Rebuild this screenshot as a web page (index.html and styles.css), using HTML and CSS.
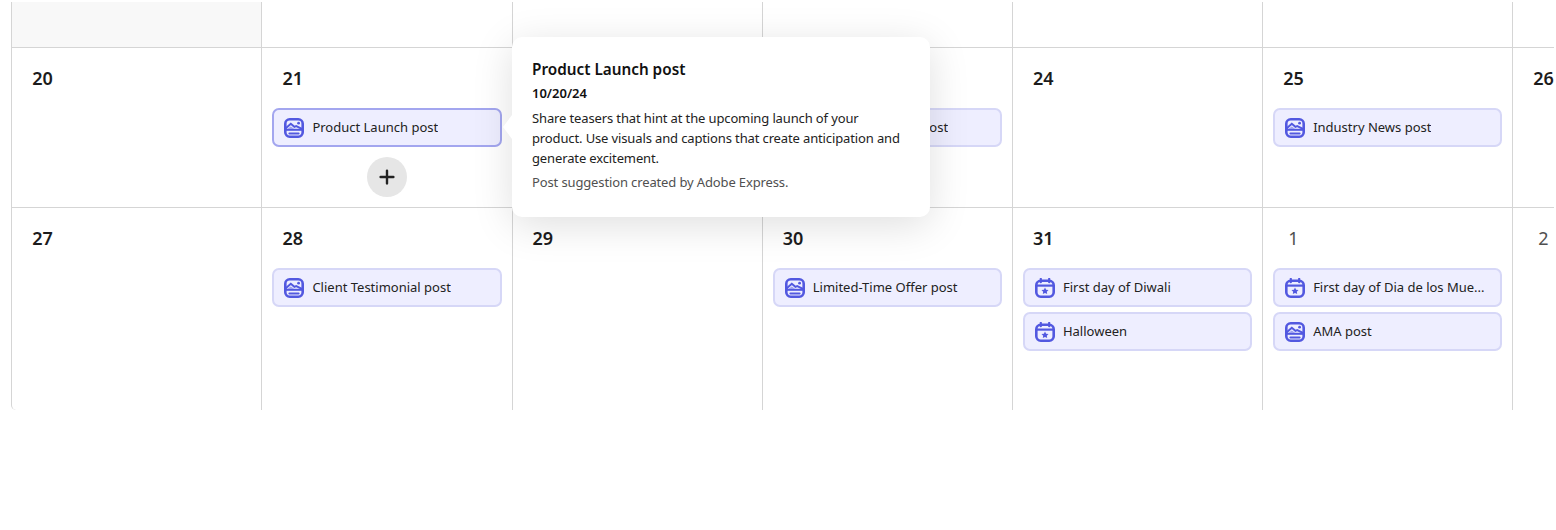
FILE: index.html
```html
<!DOCTYPE html>
<html lang="en">
<head>
<meta charset="utf-8">
<title>Content calendar</title>
<link rel="stylesheet" href="styles.css">
</head>
<body>
<svg class="defs" width="0" height="0" aria-hidden="true">
  <symbol id="i-post" viewBox="0 0 20 20">
    <rect x="1.3" y="1.3" width="17.4" height="17.4" rx="4.4" fill="none" stroke="currentColor" stroke-width="2.6"/>
    <path d="M1.5 10.4 L6.8 5.8 L10.4 8.8 L12.2 8 L18.5 11.2" fill="none" stroke="currentColor" stroke-width="2"/>
    <path d="M6.8 8.4 L10 10.8 H3.6 Z" fill="currentColor" opacity=".5"/>
    <rect x="1.5" y="10.8" width="17" height="2" fill="currentColor"/>
    <rect x="4.4" y="14.4" width="11.2" height="2" rx="1" fill="currentColor"/>
    <circle cx="14.6" cy="5.2" r="1.4" fill="currentColor"/>
  </symbol>
  <symbol id="i-event" viewBox="0 0 20 20">
    <rect x="1.3" y="2.8" width="17.4" height="15.9" rx="4.4" fill="none" stroke="currentColor" stroke-width="2.6"/>
    <path d="M1.5 7.6 H18.5" stroke="currentColor" stroke-width="2.2"/>
    <path d="M5.8 .9 V4.2 M14.2 .9 V4.2" stroke="currentColor" stroke-width="2.2" stroke-linecap="round"/>
    <path d="M10 9.6 L11.1 11.8 L13.5 12.1 L11.8 13.7 L12.2 16 L10 14.9 L7.8 16 L8.2 13.7 L6.5 12.1 L8.9 11.8 Z" fill="currentColor"/>
  </symbol>
</svg>
<main class="calendar">
  <div class="week week-top">
    <div class="day day-outside"></div><div class="day"></div><div class="day"></div><div class="day"></div><div class="day"></div><div class="day"></div><div class="day"></div>
  </div>
  <div class="week week-mid">
    <div class="day"><div class="num">20</div></div>
    <div class="day">
      <div class="num">21</div>
      <div class="chip chip-active"><svg class="ico"><use href="#i-post"/></svg><span class="label">Product Launch post</span></div>
      <button class="add" type="button" aria-label="Add post"><svg viewBox="0 0 16 16" width="16" height="16"><path d="M8 1.6 V14.4 M1.6 8 H14.4" stroke="#222" stroke-width="2.4" stroke-linecap="round"/></svg></button>
    </div>
    <div class="day"><div class="num">22</div></div>
    <div class="day">
      <div class="num">23</div>
      <div class="chip"><svg class="ico"><use href="#i-post"/></svg><span class="label">Customer Stories post</span></div>
    </div>
    <div class="day"><div class="num">24</div></div>
    <div class="day">
      <div class="num">25</div>
      <div class="chip"><svg class="ico"><use href="#i-post"/></svg><span class="label">Industry News post</span></div>
    </div>
    <div class="day"><div class="num">26</div></div>
  </div>
  <div class="week week-last">
    <div class="day"><div class="num">27</div></div>
    <div class="day">
      <div class="num">28</div>
      <div class="chip"><svg class="ico"><use href="#i-post"/></svg><span class="label">Client Testimonial post</span></div>
    </div>
    <div class="day"><div class="num">29</div></div>
    <div class="day">
      <div class="num">30</div>
      <div class="chip"><svg class="ico"><use href="#i-post"/></svg><span class="label">Limited-Time Offer post</span></div>
    </div>
    <div class="day">
      <div class="num">31</div>
      <div class="chip"><svg class="ico"><use href="#i-event"/></svg><span class="label">First day of Diwali</span></div>
      <div class="chip"><svg class="ico"><use href="#i-event"/></svg><span class="label">Halloween</span></div>
    </div>
    <div class="day">
      <div class="num num-next">1</div>
      <div class="chip"><svg class="ico"><use href="#i-event"/></svg><span class="label">First day of Dia de los Mue...</span></div>
      <div class="chip"><svg class="ico"><use href="#i-post"/></svg><span class="label">AMA post</span></div>
    </div>
    <div class="day"><div class="num num-next">2</div></div>
  </div>
</main>
<aside class="popover">
  <h2 class="pop-title">Product Launch post</h2>
  <div class="pop-date">10/20/24</div>
  <p class="pop-text">Share teasers that hint at the upcoming launch of your product. Use visuals and captions that create anticipation and generate excitement.</p>
  <p class="pop-credit">Post suggestion created by Adobe Express.</p>
</aside>
</body>
</html>
```

FILE: styles.css
```css
* { box-sizing: border-box; }
html, body { margin: 0; height: 100%; background: #fff; }
body {
  padding: 2px 2px 0 11.2px;
  font-family: "Noto Sans", "Open Sans", sans-serif;
  color: #222;
  overflow: hidden;
}
.defs { position: absolute; }
.calendar {
  width: 1542.8px;
  overflow: hidden;
}
.week {
  display: grid;
  grid-template-columns: repeat(7, 250.2px);
}
.week-top { height: 46px; border-bottom: 1px solid #d5d5d5; }
.week-mid { height: 160px; border-bottom: 1px solid #d5d5d5; }
.week-last { height: 202px; }
.week-last .day:first-child { border-bottom-left-radius: 5px; }
.day {
  border-left: 1px solid #d5d5d5;
  padding: 0 10px;
  min-width: 0;
}
.day-outside { background: #f8f8f8; }
.num {
  height: 60px;
  padding: 20px 0 0 10px;
  font-size: 18px;
  line-height: 20px;
  font-weight: 600;
  color: #1c1c1c;
}
.num-next { padding-left: 15px; font-weight: 400; color: #505050; }
.chip {
  display: flex;
  align-items: center;
  gap: 8px;
  height: 39px;
  margin-bottom: 5px;
  padding: 0 10px;
  background: #eeeeff;
  border: 2px solid #d6d7f7;
  border-radius: 7px;
  font-size: 13px;
  color: #222;
}
.chip-active { border-color: #a3a6ef; margin-bottom: 10px; }
.ico { flex: none; width: 20px; height: 20px; color: #5258e0; }
.label {
  padding-bottom: 1px;
  white-space: nowrap;
  overflow: hidden;
  text-overflow: ellipsis;
  min-width: 0;
}
.add {
  display: flex;
  align-items: center;
  justify-content: center;
  width: 40px;
  height: 40px;
  margin: 0 auto;
  padding: 0;
  border: 0;
  border-radius: 50%;
  background: #e6e6e6;
}
.popover {
  position: absolute;
  left: 512px;
  top: 37px;
  width: 418px;
  height: 180px;
  padding: 20px;
  background: #fff;
  border-radius: 10px;
  box-shadow: 0 8px 40px rgba(0, 0, 0, .13);
}
.popover::before {
  content: "";
  position: absolute;
  left: -9px;
  top: 78px;
  width: 9px;
  height: 24px;
  background: #fff;
  clip-path: polygon(100% 0, 100% 100%, 0 50%);
}
.pop-title {
  margin: 0;
  font-size: 15.3px;
  line-height: 24px;
  font-weight: 600;
  color: #111;
}
.pop-date {
  margin-top: 3px;
  font-size: 13px;
  line-height: 18px;
  font-weight: 600;
  color: #111;
}
.pop-text {
  margin: 6px 0 0;
  font-size: 13px;
  line-height: 20px;
  letter-spacing: -.01em;
  color: #222;
}
.pop-credit {
  margin: 4px 0 0;
  font-size: 13px;
  line-height: 20px;
  letter-spacing: -.01em;
  color: #505050;
}
```
